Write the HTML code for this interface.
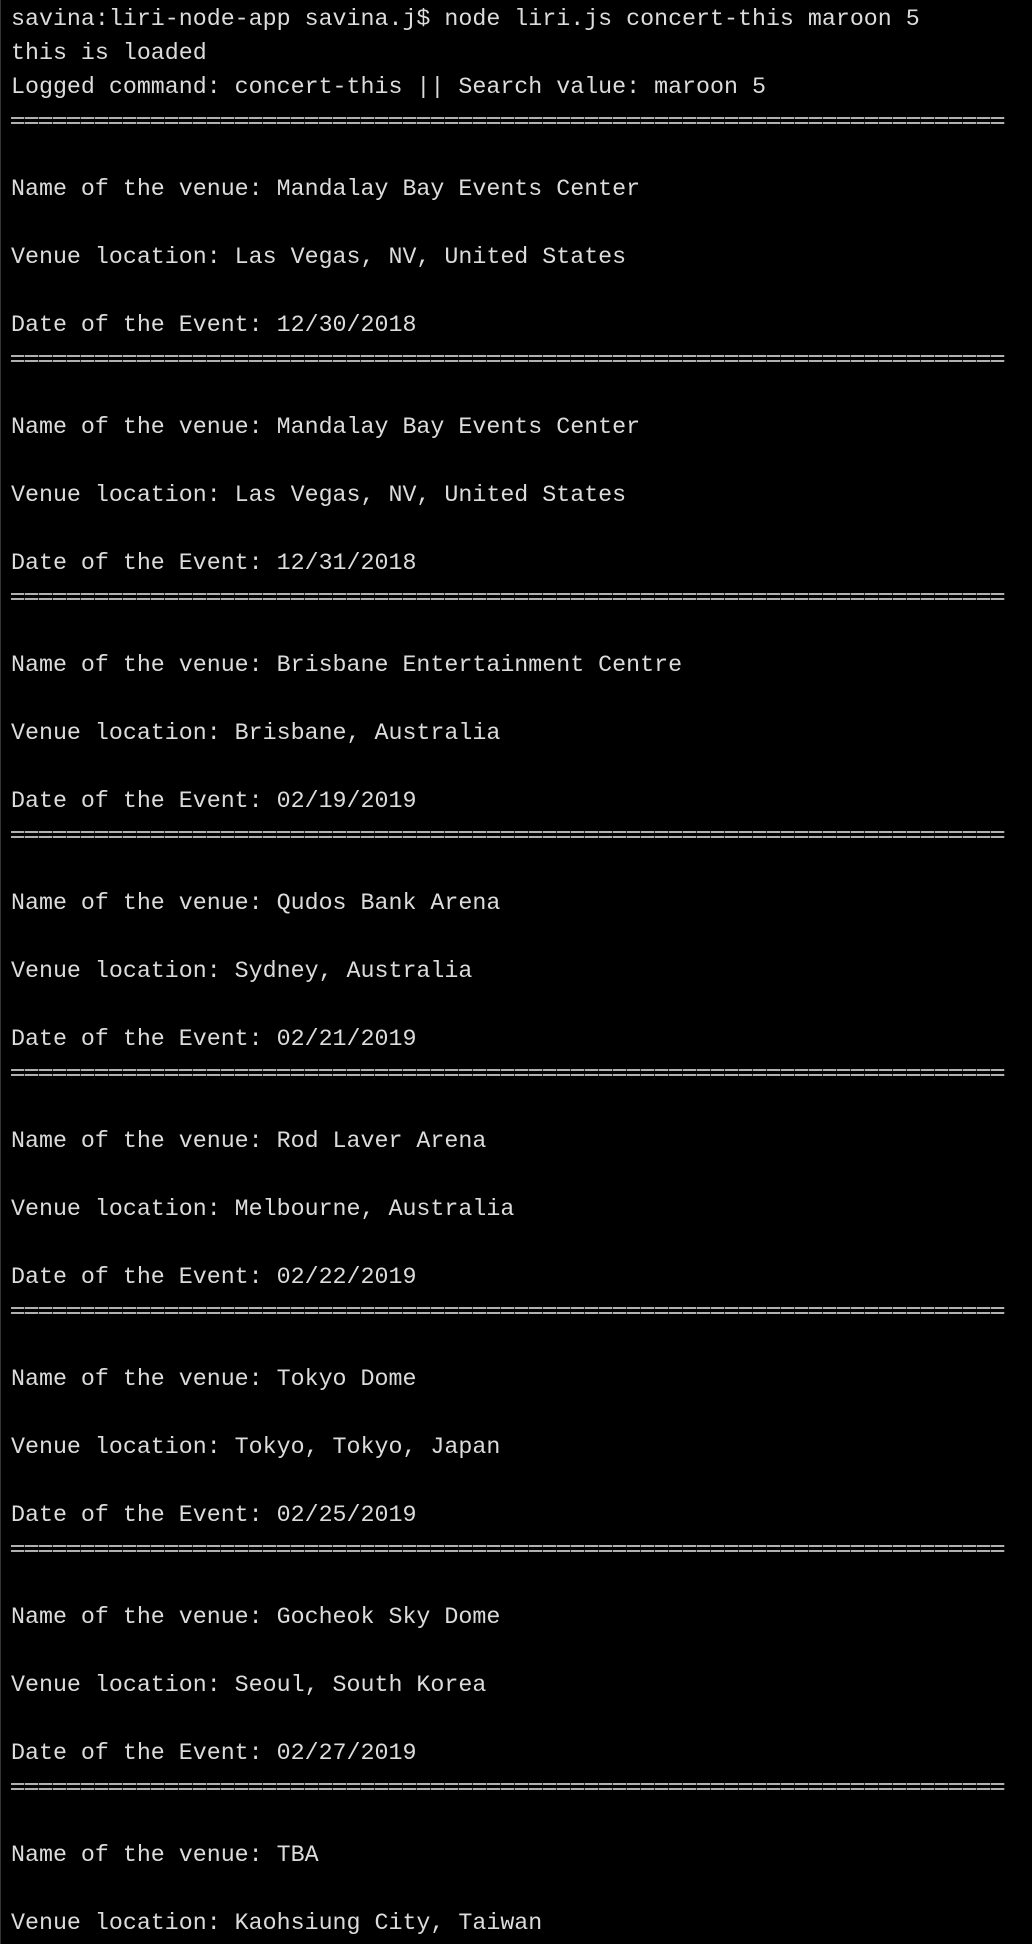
<!DOCTYPE html>
<html><head><meta charset="utf-8"><style>
html,body{margin:0;padding:0;background:#000;}
body{width:1032px;height:1944px;overflow:hidden;position:relative;border-left:1px solid #333;box-sizing:border-box;}
.t{position:absolute;left:10px;top:2px;font-family:"Liberation Mono",monospace;font-size:23.3px;line-height:34px;color:#dcdcdc;white-space:pre;}
.l{height:34px;}
.sep{height:34px;position:relative;top:-2px;}
.sep:before,.sep:after{content:"";position:absolute;left:0;width:994px;height:2px;background:repeating-linear-gradient(90deg,#b0b0b0 0 13px,#333 13px 14px);}
.sep:before{top:15px}.sep:after{top:20px}
</style></head><body><div class="t"><div class="l">savina:liri-node-app savina.j$ node liri.js concert-this maroon 5</div><div class="l">this is loaded</div><div class="l">Logged command: concert-this || Search value: maroon 5</div><div class="sep"></div><div class="l"></div><div class="l">Name of the venue: Mandalay Bay Events Center</div><div class="l"></div><div class="l">Venue location: Las Vegas, NV, United States</div><div class="l"></div><div class="l">Date of the Event: 12/30/2018</div><div class="sep"></div><div class="l"></div><div class="l">Name of the venue: Mandalay Bay Events Center</div><div class="l"></div><div class="l">Venue location: Las Vegas, NV, United States</div><div class="l"></div><div class="l">Date of the Event: 12/31/2018</div><div class="sep"></div><div class="l"></div><div class="l">Name of the venue: Brisbane Entertainment Centre</div><div class="l"></div><div class="l">Venue location: Brisbane, Australia</div><div class="l"></div><div class="l">Date of the Event: 02/19/2019</div><div class="sep"></div><div class="l"></div><div class="l">Name of the venue: Qudos Bank Arena</div><div class="l"></div><div class="l">Venue location: Sydney, Australia</div><div class="l"></div><div class="l">Date of the Event: 02/21/2019</div><div class="sep"></div><div class="l"></div><div class="l">Name of the venue: Rod Laver Arena</div><div class="l"></div><div class="l">Venue location: Melbourne, Australia</div><div class="l"></div><div class="l">Date of the Event: 02/22/2019</div><div class="sep"></div><div class="l"></div><div class="l">Name of the venue: Tokyo Dome</div><div class="l"></div><div class="l">Venue location: Tokyo, Tokyo, Japan</div><div class="l"></div><div class="l">Date of the Event: 02/25/2019</div><div class="sep"></div><div class="l"></div><div class="l">Name of the venue: Gocheok Sky Dome</div><div class="l"></div><div class="l">Venue location: Seoul, South Korea</div><div class="l"></div><div class="l">Date of the Event: 02/27/2019</div><div class="sep"></div><div class="l"></div><div class="l">Name of the venue: TBA</div><div class="l"></div><div class="l">Venue location: Kaohsiung City, Taiwan</div></div></body></html>
